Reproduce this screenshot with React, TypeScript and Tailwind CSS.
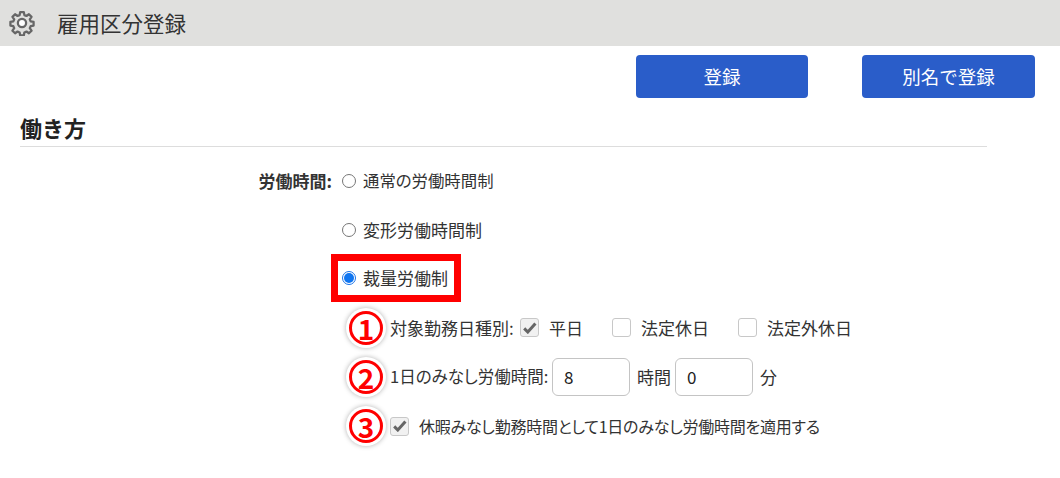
import React from 'react';

const FONT = "font-['Noto_Sans_CJK_JP','Liberation_Sans',sans-serif]";

const GearIcon = () => (
  <svg width="26" height="26" viewBox="0 0 24 24" fill="none" stroke="#666" strokeWidth="2.1" strokeLinejoin="round">
    <path d="M10.3 2h3.4l.5 2.7 1.9.8 2.3-1.6 2.4 2.4-1.6 2.3.8 1.9 2.7.5v3.4l-2.7.5-.8 1.9 1.6 2.3-2.4 2.4-2.3-1.6-1.9.8-.5 2.7h-3.4l-.5-2.7-1.9-.8-2.3 1.6-2.4-2.4 1.6-2.3-.8-1.9-2.7-.5v-3.4l2.7-.5.8-1.9-1.6-2.3 2.4-2.4 2.3 1.6 1.9-.8z" />
    <circle cx="12" cy="12" r="3.8" fill="#fff" />
  </svg>
);

const Radio = ({ checked }: { checked?: boolean }) => (
  <span
    className={`flex h-[14px] w-[14px] shrink-0 items-center justify-center rounded-full border bg-white ${
      checked ? 'border-[#1a73e8]' : 'border-[#767676]'
    }`}
  >
    {checked && <span className="h-[10px] w-[10px] rounded-full bg-[#0f75f0]" />}
  </span>
);

const Check = ({ checked }: { checked?: boolean }) => (
  <span
    className={`flex h-[19px] w-[19px] shrink-0 items-center justify-center rounded-[3px] border border-[#c8c8c8] ${
      checked ? 'bg-[#f1f1f1]' : 'bg-white'
    }`}
  >
    {checked && (
      <svg width="14" height="12" viewBox="0 0 14 12" fill="none" stroke="#666" strokeWidth="3">
        <path d="M1.2 6.4l3.6 3.6 7.6-8.4" />
      </svg>
    )}
  </span>
);

const Marker = ({ children }: { children: React.ReactNode }) => (
  <span className="flex h-[40px] w-[40px] shrink-0 items-center justify-center rounded-full bg-white shadow-[0_0_5px_rgba(0,0,0,0.3)]">
    <span className="flex h-[34px] w-[34px] items-center justify-center rounded-full border-[3px] border-[#ff0000] text-[28px] leading-none font-bold text-[#ff0000]">
      {children}
    </span>
  </span>
);

const NumberInput = ({ value }: { value: string }) => (
  <span className="flex h-[38px] w-[78px] items-center rounded-[6px] border border-[#c4c4c4] bg-white pl-[11px] text-[17px] text-[#222]">
    {value}
  </span>
);

const App = () => {
  return (
    <div className={`h-[478px] w-[1060px] overflow-hidden bg-white text-[17px] text-[#333] [font-feature-settings:'palt'] ${FONT}`}>
      <div className="flex h-[46px] items-center bg-[#e0e0de] pl-[9px] [font-feature-settings:normal]">
        <GearIcon />
        <h1 className="ml-[22px] text-[21.5px] font-normal text-[#333]">雇用区分登録</h1>
      </div>

      <div className="mt-[9px] flex justify-end gap-[54px] pr-[25px] [font-feature-settings:normal]">
        <button className="h-[43px] w-[172px] rounded-[4px] bg-[#2a5dc9] text-[18.5px] text-white">登録</button>
        <button className="h-[43px] w-[173px] rounded-[4px] bg-[#2a5dc9] text-[18.5px] text-white">別名で登録</button>
      </div>

      <div className="mx-[20px] mt-[12px] h-[37px] w-[967px] border-b border-[#dddddd] [font-feature-settings:normal]">
        <h2 className="text-[22px] leading-[34px] font-bold text-[#222]">働き方</h2>
      </div>

      <div className="mt-[9px] flex">
        <div className="h-[49px] w-[332px] text-right leading-[49px] font-bold">労働時間:</div>
        <div className="flex flex-col">
          <label className="flex h-[49px] items-center gap-[7px] pl-[10px]">
            <Radio />
            <span className="text-[16.4px]">通常の労働時間制</span>
          </label>
          <label className="flex h-[49px] items-center gap-[7px] pl-[10px]">
            <Radio />
            <span>変形労働時間制</span>
          </label>
          <label className="-ml-[1px] flex h-[48px] w-[130px] items-center gap-[7px] self-start border-[7px] border-[#ff0000] pl-[4px]">
            <Radio checked />
            <span className="whitespace-nowrap">裁量労働制</span>
          </label>

          <div className="mt-[1px] flex h-[49px] items-center pl-[14px]">
            <Marker>1</Marker>
            <span className="ml-[4px] w-[130px] whitespace-nowrap">対象勤務日種別:</span>
            <Check checked />
            <span className="ml-[10px] w-[32px] whitespace-nowrap">平日</span>
            <span className="ml-[31px]"><Check /></span>
            <span className="ml-[10px] w-[67px] whitespace-nowrap">法定休日</span>
            <span className="ml-[30px]"><Check /></span>
            <span className="ml-[10px] whitespace-nowrap">法定外休日</span>
          </div>

          <div className="flex h-[49px] items-center pl-[14px]">
            <Marker>2</Marker>
            <span className="ml-[4px] w-[162px] text-[16.5px] whitespace-nowrap">1日のみなし労働時間:</span>
            <NumberInput value="8" />
            <span className="ml-[7px] w-[31px] whitespace-nowrap">時間</span>
            <span className="ml-[7px]"><NumberInput value="0" /></span>
            <span className="ml-[7px]">分</span>
          </div>

          <div className="flex h-[50px] items-center pl-[14px]">
            <Marker>3</Marker>
            <span className="ml-[4px]"><Check checked /></span>
            <span className="ml-[10px] text-[16px] tracking-[-0.25px] whitespace-nowrap">休暇みなし勤務時間として1日のみなし労働時間を適用する</span>
          </div>
        </div>
      </div>
    </div>
  );
};

export default App;
